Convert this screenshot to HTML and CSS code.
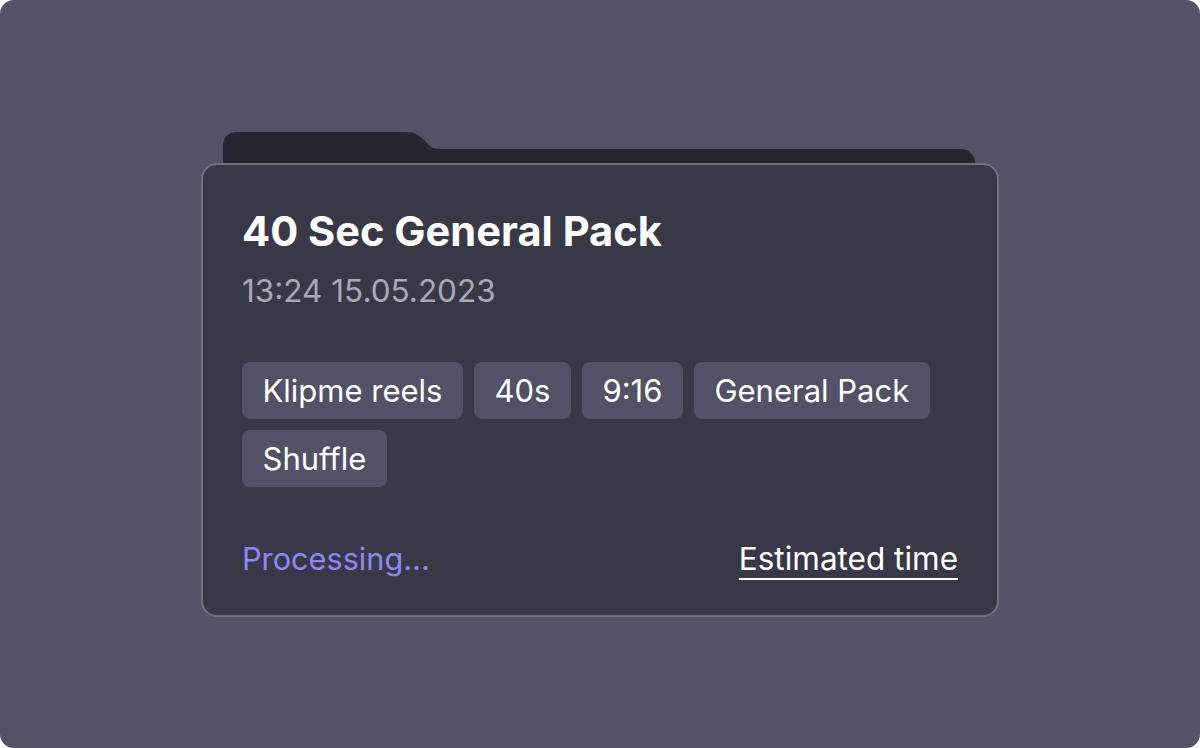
FILE: index.html
```html
<!DOCTYPE html>
<html>
<head>
<meta charset="utf-8">
<link rel="stylesheet" href="styles.css">
</head>
<body>
<div class="stage">
  <div class="folder">
    <svg class="tab" width="752" height="31" viewBox="0 0 752 31">
      <path d="M0 31 V13 A13 13 0 0 1 13 0 H184 C192 0 196 3 201 8 L206 13 C209 16 212 17 217 17 H738 A14 14 0 0 1 752 31 Z" fill="#26252f"/>
    </svg>
    <div class="card">
      <h1 class="title">40 Sec General Pack</h1>
      <div class="date">13:24 15.05.2023</div>
      <div class="tags">
        <span class="tag">Klipme reels</span>
        <span class="tag">40s</span>
        <span class="tag">9:16</span>
        <span class="tag">General Pack</span>
        <span class="tag">Shuffle</span>
      </div>
      <div class="footer">
        <span class="status">Processing...</span>
        <a class="estimate">Estimated time</a>
      </div>
    </div>
  </div>
</div>
</body>
</html>
```

FILE: styles.css
```css
* { box-sizing: border-box; }
html, body { margin: 0; padding: 0; background: #ffffff; }
body { font-family: Inter, "Noto Sans", sans-serif; }
.stage {
  width: 1200px;
  height: 748px;
  background: #545366;
  border-radius: 14px;
  display: flex;
  align-items: center;
  justify-content: center;
}
.folder {
  width: 798px;
  display: flex;
  flex-direction: column;
}
.tab {
  display: block;
  margin-left: 22px;
}
.card {
  background: #393846;
  border: 2px solid #717083;
  border-radius: 16px;
  padding: 41px 39px 36px 39px;
}
.title {
  margin: 0;
  color: #ffffff;
  font-size: 41.6px;
  font-weight: 700;
  line-height: 50px;
}
.date {
  margin-top: 15px;
  color: #a9a8b6;
  font-size: 31.5px;
  line-height: 40px;
}
.tags {
  margin-top: 51px;
  display: flex;
  flex-wrap: wrap;
  gap: 11px;
}
.tag {
  background: #525165;
  color: #ffffff;
  border-radius: 8px;
  height: 57px;
  padding: 0 20.5px;
  font-size: 31px;
  display: flex;
  align-items: center;
}
.footer {
  margin-top: 52px;
  display: flex;
  justify-content: space-between;
  align-items: baseline;
  font-size: 30.7px;
  line-height: 40px;
}
.status { color: #8b88f3; }
.estimate {
  color: #ffffff;
  font-size: 31.5px;
  text-decoration: underline;
  text-decoration-thickness: 2px;
  text-underline-offset: 8px;
}
```
